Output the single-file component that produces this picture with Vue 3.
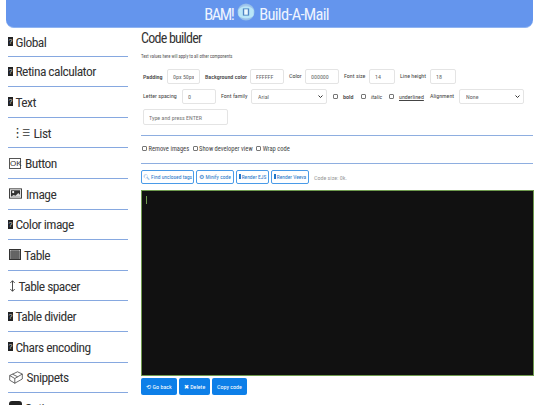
<script setup>
const items = [
  { icon: 'q', label: 'Global' },
  { icon: 'q', label: 'Retina calculator' },
  { icon: 'q', label: 'Text' },
  { icon: 'list', label: 'List' },
  { icon: 'ok', label: 'Button' },
  { icon: 'img', label: 'Image' },
  { icon: 'q', label: 'Color image' },
  { icon: 'table', label: 'Table' },
  { icon: 'spacer', label: 'Table spacer' },
  { icon: 'q', label: 'Table divider' },
  { icon: 'q', label: 'Chars encoding' },
  { icon: 'box', label: 'Snippets' },
  { icon: 'opt', label: 'Options' }
]
</script>

<template>
  <div class="page">
    <header class="banner">
      <span class="bam">BAM!</span>
      <svg class="logo" viewBox="0 0 20 20" aria-hidden="true">
        <defs>
          <radialGradient id="lg" cx="50%" cy="50%" r="55%">
            <stop offset="0" stop-color="#e6f6fc" />
            <stop offset="1" stop-color="#86b4e6" />
          </radialGradient>
        </defs>
        <circle cx="10" cy="10" r="9.5" fill="url(#lg)" />
        <path d="M1.500 8a8.500 4 0 0 1 17 0v5a8.500 4 0 0 1-17 0z" fill="#b9e6f8" />
        <rect x="6.500" y="6" width="7" height="8" fill="#4f86c4" />
        <rect x="8" y="7" width="4" height="6" fill="#eef9ff" />
      </svg>
      <span>Build-A-Mail</span>
    </header>
    <div class="columns">
      <nav class="side">
        <div v-for="item in items" :key="item.label" class="side-item">
          <span v-if="item.icon === 'q'" class="tofu">?</span>
          <span v-else-if="item.icon === 'list'" class="list-glyph"><i class="dots">⋮</i><i class="bars">☰</i></span>
          <span v-else-if="item.icon === 'ok'" class="ok">OK</span>
          <svg v-else-if="item.icon === 'img'" class="ico img" viewBox="0 0 14 11">
            <rect x=".5" y=".5" width="13" height="10" fill="#fff" stroke="#333" />
            <rect x="2" y="2" width="10" height="7" fill="#333" />
            <circle cx="4.500" cy="4" r="1.200" fill="#fff" />
            <path d="M2 9l3-2 2 1 3-3 2 2v2z" fill="#ddd" />
          </svg>
          <svg v-else-if="item.icon === 'table'" class="ico grid" viewBox="0 0 12 11">
            <rect x=".5" y=".5" width="11" height="10" fill="#bbb" stroke="#333" />
            <path d="M3 0v11M5 0v11M7 0v11M9 0v11M0 3h12M0 5h12M0 7h12M0 9h12" stroke="#333" stroke-width=".8" />
          </svg>
          <svg v-else-if="item.icon === 'spacer'" class="ico spacer" viewBox="0 0 8 14">
            <path d="M4 1v12M1.500 3.500L4 1l2.500 2.500M1.500 10.500L4 13l2.500-2.500" fill="none" stroke="#333" stroke-width="1" />
          </svg>
          <svg v-else-if="item.icon === 'box'" class="ico box" viewBox="0 0 14 13">
            <path d="M.7 4.500L8.500.8l4.800 2.200v5l-7.500 4.200-5.100-3zM.7 4.500l5.100 3v5M5.800 7.500l7.500-4.500M3.500 3.200l5.200 2.600" fill="none" stroke="#444" stroke-width=".8" />
          </svg>
          <span v-else class="opt">?</span>
          <span>{{ item.label }}</span>
        </div>
      </nav>
      <main class="main">
        <h1 class="title">Code builder</h1>
        <p class="hint">Text values here will apply to all other components</p>
        <div class="fields">
          <div class="row">
            <label class="lbl strong first l19">Padding</label>
            <input class="field w33" value="0px 50px" />
            <label class="lbl strong l40">Background color</label>
            <input class="field w34" value="FFFFFF" />
            <label class="lbl up l11">Color</label>
            <input class="field w34" value="000000" />
            <label class="lbl up l20">Font size</label>
            <input class="field w26" value="14" />
            <label class="lbl up l25">Line height</label>
            <input class="field w26" value="18" />
          </div>
          <div class="row">
            <label class="lbl first up l34">Letter spacing</label>
            <input class="field w34" value="0" />
            <label class="lbl up l25">Font family</label>
            <select class="field sel w76"><option>Arial</option></select>
            <input type="checkbox" class="check" />
            <span class="lbl strong l12">bold</span>
            <input type="checkbox" class="check" />
            <span class="lbl italic l12">italic</span>
            <input type="checkbox" class="check" />
            <span class="lbl under l26">underlined</span>
            <label class="lbl up l24">Alignment</label>
            <select class="field sel w65"><option>None</option></select>
          </div>
          <div class="row">
            <input class="field tag first" placeholder="Type and press ENTER" />
          </div>
        </div>
        <hr class="rule" />
        <div class="checks">
          <label class="opt-check"><input type="checkbox" class="check" />Remove images</label>
          <label class="opt-check"><input type="checkbox" class="check" />Show developer view</label>
          <label class="opt-check"><input type="checkbox" class="check" />Wrap code</label>
        </div>
        <hr class="rule" />
        <div class="tools">
          <button class="tool w53">🔍︎ Find unclosed tags</button>
          <button class="tool w38">⚙ Minify code</button>
          <button class="tool w33"><i class="mini"></i>Render EJS</button>
          <button class="tool w38"><i class="mini"></i>Render Veeva</button>
          <span class="size">Code size: 0k.</span>
        </div>
        <div class="editor"><i class="caret"></i></div>
        <div class="actions">
          <button class="act w36">⟲ Go back</button>
          <button class="act w31">✖ Delete</button>
          <button class="act w35">Copy code</button>
        </div>
      </main>
    </div>
  </div>
</template>

<style scoped>
.page {
  width: 540px;
  height: 405px;
  overflow: hidden;
  font-family: "Roboto", "Open Sans", "Liberation Sans", sans-serif;
  font-stretch: 75%;
  color: #333;
  background: #fff;
}
.banner {
  margin: 0 7px 0 6px;
  height: 28px;
  background: #6495ed;
  border-radius: 0 0 8px 8px;
  color: #eef4ff;
  font-size: 16.5px;
  letter-spacing: -0.75px;
  display: flex;
  justify-content: center;
  align-items: center;
  gap: 4px;
  padding: 2px 6px 0 0;
  box-sizing: border-box;
  border-bottom: 1px solid #8fb4f2;
}
.bam { letter-spacing: -1.500px; }
.logo { width: 18px; height: 18px; margin-top: -5px; }
.columns { display: flex; }
.side { width: 120px; margin-left: 8px; flex: none; }
.side-item {
  height: 30.6px;
  box-sizing: border-box;
  border-bottom: 1px solid #86a8e0;
  display: flex;
  align-items: center;
  gap: 2.5px;
  font-size: 13.500px;
  letter-spacing: -0.55px;
  color: #333;
}
.side-item:first-child { height: 28.6px; }
.tofu {
  width: 5px;
  height: 9px;
  background: #222;
  color: #ddd;
  font-size: 7px;
  line-height: 9px;
  letter-spacing: 0;
  text-align: center;
  flex: none;
  font-family: "Liberation Sans", sans-serif;
}
.list-glyph {
  flex: none;
  padding-left: 3px;
  display: flex;
  align-items: center;
  gap: 3px;
  font-size: 10px;
  letter-spacing: 0;
  font-family: "DejaVu Sans", sans-serif;
  font-stretch: 100%;
}
.list-glyph i { font-style: normal; display: block; flex: none; }
.dots { width: 8px; font-size: 13px; text-align: center; }
.bars { width: 9px; font-size: 9px; overflow: hidden; }
.ok {
  box-sizing: border-box;
  width: 12px;
  height: 11px;
  margin: 0 1.500px 0 1px;
  border: 1px solid #555;
  font-size: 8px;
  line-height: 9px;
  letter-spacing: 0;
  text-align: center;
  font-family: "Liberation Sans", sans-serif;
}
.ico { flex: none; }
.img { width: 13px; height: 11px; margin: 0 1.500px 0 1px; }
.grid { width: 12px; height: 11px; margin: 0 .5px 0 1px; }
.spacer { width: 7px; height: 14px; margin-left: 1px; }
.box { width: 14px; height: 13px; margin: 0 1px; }
.opt {
  width: 13px;
  height: 13px;
  margin: 0 0 0 1px;
  background: #222;
  color: #fff;
  border-radius: 3px;
  font-size: 8px;
  line-height: 13px;
  text-align: center;
}
.main { margin-left: 13px; width: 392px; flex: none; }
.title { margin: 2px 0 0; font-size: 14px; line-height: 17px; font-weight: 400; letter-spacing: -0.75px; color: #333; }
.hint { margin: 6px 0 0; font-size: 4.600px; line-height: 7px; color: #555; }
.fields { margin-top: 9px; display: flex; flex-direction: column; gap: 5px; }
.row { display: flex; align-items: center; height: 15px; gap: 5px; }
.row:last-child { height: 16px; }
.lbl { font-size: 6px; color: #444; white-space: nowrap; }
.strong { font-weight: 500; }
.up { position: relative; top: -1px; }
.first { margin-left: 2px; }
.l11 { width: 11px; }
.l12 { width: 12px; }
.l19 { width: 19px; }
.l20 { width: 20px; }
.l24 { width: 24px; }
.l25 { width: 25px; }
.l26 { width: 26px; }
.l34 { width: 34px; }
.l40 { width: 40px; }
.field {
  box-sizing: border-box;
  height: 100%;
  border: 1px solid #e4e4e4;
  border-radius: 2px;
  background: #fff;
  font-family: inherit;
  font-stretch: inherit;
  font-size: 6px;
  color: #666;
  padding: 0 5px;
  outline: none;
  min-width: 0;
}
.field::placeholder { color: #777; }
.sel {
  padding: 0 6px;
  appearance: none;
  background: #fff url("data:image/svg+xml,%3Csvg xmlns='http://www.w3.org/2000/svg' width='5' height='3'%3E%3Cpath d='M.5.5L2.5 2.5 4.5.5' fill='none' stroke='%23333'/%3E%3C/svg%3E") no-repeat right 3px center;
}
.w26 { width: 26px; }
.w31 { width: 31px; }
.w33 { width: 33px; }
.w34 { width: 34px; }
.w35 { width: 35px; }
.w36 { width: 36px; }
.w38 { width: 38px; }
.w53 { width: 53px; }
.w65 { width: 65px; }
.w76 { width: 76px; }
.tag { width: 85px; }
.check {
  appearance: none;
  box-sizing: border-box;
  width: 5px;
  height: 5px;
  margin: 0 0 0 1px;
  border: 1px solid #777;
  border-radius: 1px;
  background: #fff;
  flex: none;
}
.italic { font-style: italic; }
.under { text-decoration: underline; }
.rule { border: 0; border-top: 1px solid #8eaee0; margin: 0; }
.fields + .rule { margin-top: 10px; }
.checks { display: flex; align-items: center; gap: 2.500px; height: 27px; padding-bottom: 2px; box-sizing: border-box; }
.opt-check { display: flex; align-items: center; gap: 1.500px; font-size: 6.500px; color: #444; }
.tools { margin-top: 6px; display: flex; align-items: center; gap: 2px; height: 14px; }
.tool {
  box-sizing: border-box;
  height: 14px;
  border: 1px solid #4a9be8;
  border-radius: 2px;
  background: #fff;
  color: #1f77c9;
  font-family: inherit;
  font-stretch: inherit;
  font-size: 5.500px;
  padding: 0;
  white-space: nowrap;
}
.mini { display: inline-block; width: 2px; height: 5px; background: #1f77c9; margin-right: 1px; }
.size { margin-left: 3px; font-size: 6px; color: #999; }
.editor {
  box-sizing: border-box;
  margin-top: 6px;
  height: 186px;
  width: 393px;
  background: #111;
  border: 1px solid #6f9a4e;
  padding: 5px 4px;
}
.caret { display: block; width: 1px; height: 8px; background: #6f9a4e; }
.actions { margin-top: 2px; display: flex; gap: 2px; height: 17px; }
.act {
  height: 17px;
  box-sizing: border-box;
  border: 0;
  border-radius: 2px;
  background: #0d7fe8;
  color: #fff;
  font-family: inherit;
  font-stretch: inherit;
  font-size: 6px;
  padding: 0;
}
</style>
